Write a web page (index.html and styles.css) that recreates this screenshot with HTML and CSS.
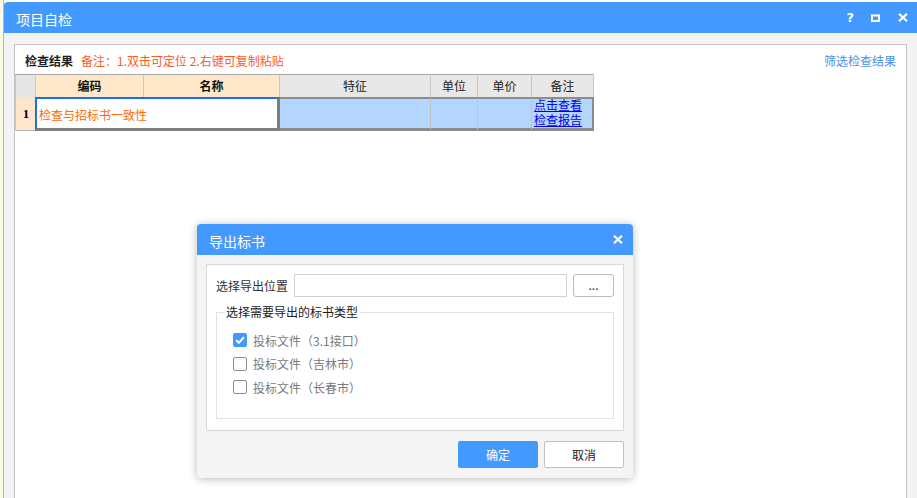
FILE: index.html
```html
<!DOCTYPE html>
<html lang="zh-CN">
<head>
<meta charset="utf-8">
<title>项目自检</title>
<link rel="stylesheet" href="styles.css">
</head>
<body>
<div class="app">
  <div class="window">
    <div class="titlebar">
      <span class="title">项目自检</span>
      <div class="win-tools">
        <span class="help">?</span>
        <svg class="tool-max" width="9" height="8" viewBox="0 0 9 8"><rect x="1" y="1.5" width="7" height="5.5" fill="none" stroke="#fff" stroke-width="2"/></svg>
        <svg class="tool-close" width="10" height="9" viewBox="0 0 10 9"><path d="M1 0.8L9 8.2M9 0.8L1 8.2" stroke="#fff" stroke-width="2.2"/></svg>
      </div>
    </div>
    <div class="win-body">
      <div class="panel">
        <div class="panel-head">
          <span class="ph-title">检查结果</span>
          <span class="ph-note">备注：1.双击可定位 2.右键可复制粘贴</span>
          <span class="ph-filter">筛选检查结果</span>
        </div>
        <div class="grid">
          <div class="hc corner"></div>
          <div class="hc key">编码</div>
          <div class="hc key">名称</div>
          <div class="hc">特征</div>
          <div class="hc">单位</div>
          <div class="hc">单价</div>
          <div class="hc">备注</div>
          <div class="rc num">1</div>
          <div class="rc name">检查与招标书一致性</div>
          <div class="rc sel"></div>
          <div class="rc sel"></div>
          <div class="rc sel"></div>
          <div class="rc sel last"><span class="link">点击查看<br>检查报告</span></div>
        </div>
      </div>
    </div>
  </div>

  <div class="dialog">
    <div class="dlg-title">
      <span>导出标书</span>
      <svg width="10" height="9" viewBox="0 0 10 9"><path d="M1 0.8L9 8.2M9 0.8L1 8.2" stroke="#fff" stroke-width="2.2"/></svg>
    </div>
    <div class="dlg-body">
      <div class="dlg-box">
        <div class="path-row">
          <span class="path-label">选择导出位置</span>
          <div class="path-input"></div>
          <div class="path-btn">...</div>
        </div>
        <div class="group">
          <span class="legend">选择需要导出的标书类型</span>
          <div class="opt">
            <svg class="cb" width="14" height="14" viewBox="0 0 14 14"><rect x="0" y="0" width="14" height="14" rx="2" fill="#4499ff"/><path d="M3.2 7.2L5.9 9.8L10.9 4.2" fill="none" stroke="#fff" stroke-width="2"/></svg>
            <span>投标文件（3.1接口）</span>
          </div>
          <div class="opt">
            <span class="cb empty"></span>
            <span>投标文件（吉林市）</span>
          </div>
          <div class="opt">
            <span class="cb empty"></span>
            <span>投标文件（长春市）</span>
          </div>
        </div>
      </div>
      <div class="dlg-actions">
        <div class="btn primary">确定</div>
        <div class="btn">取消</div>
      </div>
    </div>
  </div>
</div>
</body>
</html>
```

FILE: styles.css
```css
* { box-sizing: border-box; }

html, body {
  margin: 0;
  padding: 0;
  width: 917px;
  height: 498px;
  overflow: hidden;
  font-family: "Noto Sans CJK SC", "Microsoft YaHei", sans-serif;
  font-size: 12px;
}

.app {
  position: relative;
  width: 917px;
  height: 498px;
  padding: 2px 0 0 4px;
  background: linear-gradient(to right, #fdfbe6 0, #fdfbe6 3px, #b4b4b4 3px, #b4b4b4 4px, #ffffff 4px);
}

.window {
  height: 496px;
  display: flex;
  flex-direction: column;
  border-top-left-radius: 4px;
  overflow: hidden;
  background: #f3f3f3;
}

.titlebar {
  height: 31px;
  flex: none;
  background: #4499ff;
  color: #fff;
  display: flex;
  align-items: center;
  justify-content: space-between;
  padding: 3px 9px 0 12px;
}

.title {
  font-size: 14px;
  line-height: 16px;
}

.win-tools {
  display: flex;
  align-items: center;
  margin-top: -3px;
}

.help {
  font-family: "DejaVu Sans", sans-serif;
  font-weight: bold;
  font-size: 13px;
  margin-right: 17px;
}

.tool-max { margin-right: 18px; }

.win-body {
  flex: 1;
  padding: 11px 10px 0 10px;
}

.panel {
  height: 470px;
  background: #fff;
  border: 1px solid #c4c4c4;
  border-bottom: none;
}

.panel-head {
  height: 29px;
  display: flex;
  align-items: center;
  padding: 2px 10px 0 10px;
}

.ph-title {
  font-weight: bold;
  color: #1e1e1e;
}

.ph-note {
  color: #ff5a1e;
  margin-left: 8px;
}

.ph-filter {
  margin-left: auto;
  color: #4a90e6;
}

.grid {
  display: grid;
  grid-template-columns: 21px 108px 136px 151px 47px 54px 62px;
  grid-template-rows: 23px 34px;
  width: 579px;
}

.hc {
  border-top: 1px solid #a6a6a6;
  border-right: 1px solid #c8c8c8;
  background: #e8e8e8;
  color: #222;
  display: flex;
  align-items: center;
  justify-content: center;
  line-height: 22px;
}

.hc.corner {
  border-left: 1px solid #c8c8c8;
  background: #e6e6e6;
}

.hc.key {
  background: #fee8c9;
  font-weight: bold;
  color: #111;
}

.rc {
  height: 34px;
}

.rc.num {
  background: #fde6c9;
  border-left: 1px solid #c8c8c8;
  border-bottom: 1px solid #b4b4b4;
  font-family: "Liberation Serif", serif;
  font-weight: bold;
  font-size: 13px;
  display: flex;
  align-items: center;
  justify-content: center;
  padding-top: 1px;
}

.rc.name {
  grid-column: span 2;
  background: #fff;
  border-top: 2px solid #1a6ef0;
  border-left: 2px solid #1a6ef0;
  border-right: 3px solid #7c7c7c;
  border-bottom: 3px solid #808080;
  margin-left: -1px;
  color: #ff6a00;
  display: flex;
  align-items: center;
  padding-left: 2px;
  padding-top: 2px;
}

.rc.sel {
  background: #b4d5fe;
  border-top: 2px solid #8c8c8c;
  border-bottom: 3px solid #8c8c8c;
  border-right: 1px solid #c2c2c2;
}

.rc.sel.last {
  border-right: 2px solid #8c8c8c;
  padding-left: 2px;
}

.link {
  display: block;
  color: #0000ee;
  text-decoration: underline;
  line-height: 14.5px;
  font-size: 12px;
  margin-top: -1px;
}

/* dialog */
.dialog {
  position: absolute;
  left: 197px;
  top: 224px;
  width: 436px;
  height: 254px;
  background: #f4f4f4;
  border-radius: 4px;
  box-shadow: 0 1px 8px rgba(0, 0, 0, 0.28);
  overflow: hidden;
}

.dlg-title {
  height: 31px;
  background: #4499ff;
  color: #fff;
  font-size: 14px;
  display: flex;
  align-items: center;
  justify-content: space-between;
  padding: 2px 10px 0 12px;
}

.dlg-title svg { margin-top: -2px; }

.dlg-body {
  padding: 9px 9px 0 9px;
}

.dlg-box {
  height: 167px;
  background: #fff;
  border: 1px solid #d8d8d8;
  padding: 9px 9px 0 9px;
}

.path-row {
  display: flex;
  align-items: center;
  height: 23px;
}

.path-label {
  color: #333;
  width: 72px;
  white-space: nowrap;
  margin-right: 6px;
}

.path-input {
  width: 273px;
  height: 23px;
  border: 1px solid #d2d2d2;
  background: #fff;
}

.path-btn {
  width: 41px;
  height: 23px;
  margin-left: 6px;
  border: 1px solid #bdbdbd;
  border-radius: 3px;
  display: flex;
  align-items: center;
  justify-content: center;
  color: #333;
  font-size: 12px;
  line-height: 1;
  padding-bottom: 2px;
}

.group {
  position: relative;
  margin-top: 15px;
  height: 107px;
  border: 1px solid #e2e2e2;
  padding: 20px 0 0 16px;
  display: flex;
  flex-direction: column;
  gap: 9.5px;
}

.legend {
  position: absolute;
  top: -9px;
  left: 7px;
  padding: 0 2px;
  background: #fff;
  color: #222;
  line-height: 16px;
}

.opt {
  display: flex;
  align-items: center;
  height: 14px;
  color: #7a7a7a;
}

.cb {
  width: 14px;
  height: 14px;
  margin-right: 6px;
  flex: none;
}

.cb.empty {
  border: 1px solid #8a8a8a;
  border-radius: 2px;
  background: #fff;
}

.dlg-actions {
  display: flex;
  justify-content: flex-end;
  gap: 6px;
  margin-top: 10px;
}

.btn {
  width: 80px;
  height: 27px;
  border: 1px solid #c2c2c2;
  border-radius: 2px;
  background: #fff;
  color: #222;
  display: flex;
  align-items: center;
  justify-content: center;
  font-size: 12px;
}

.btn.primary {
  background: #4499ff;
  border-color: #4499ff;
  color: #fff;
}
```
